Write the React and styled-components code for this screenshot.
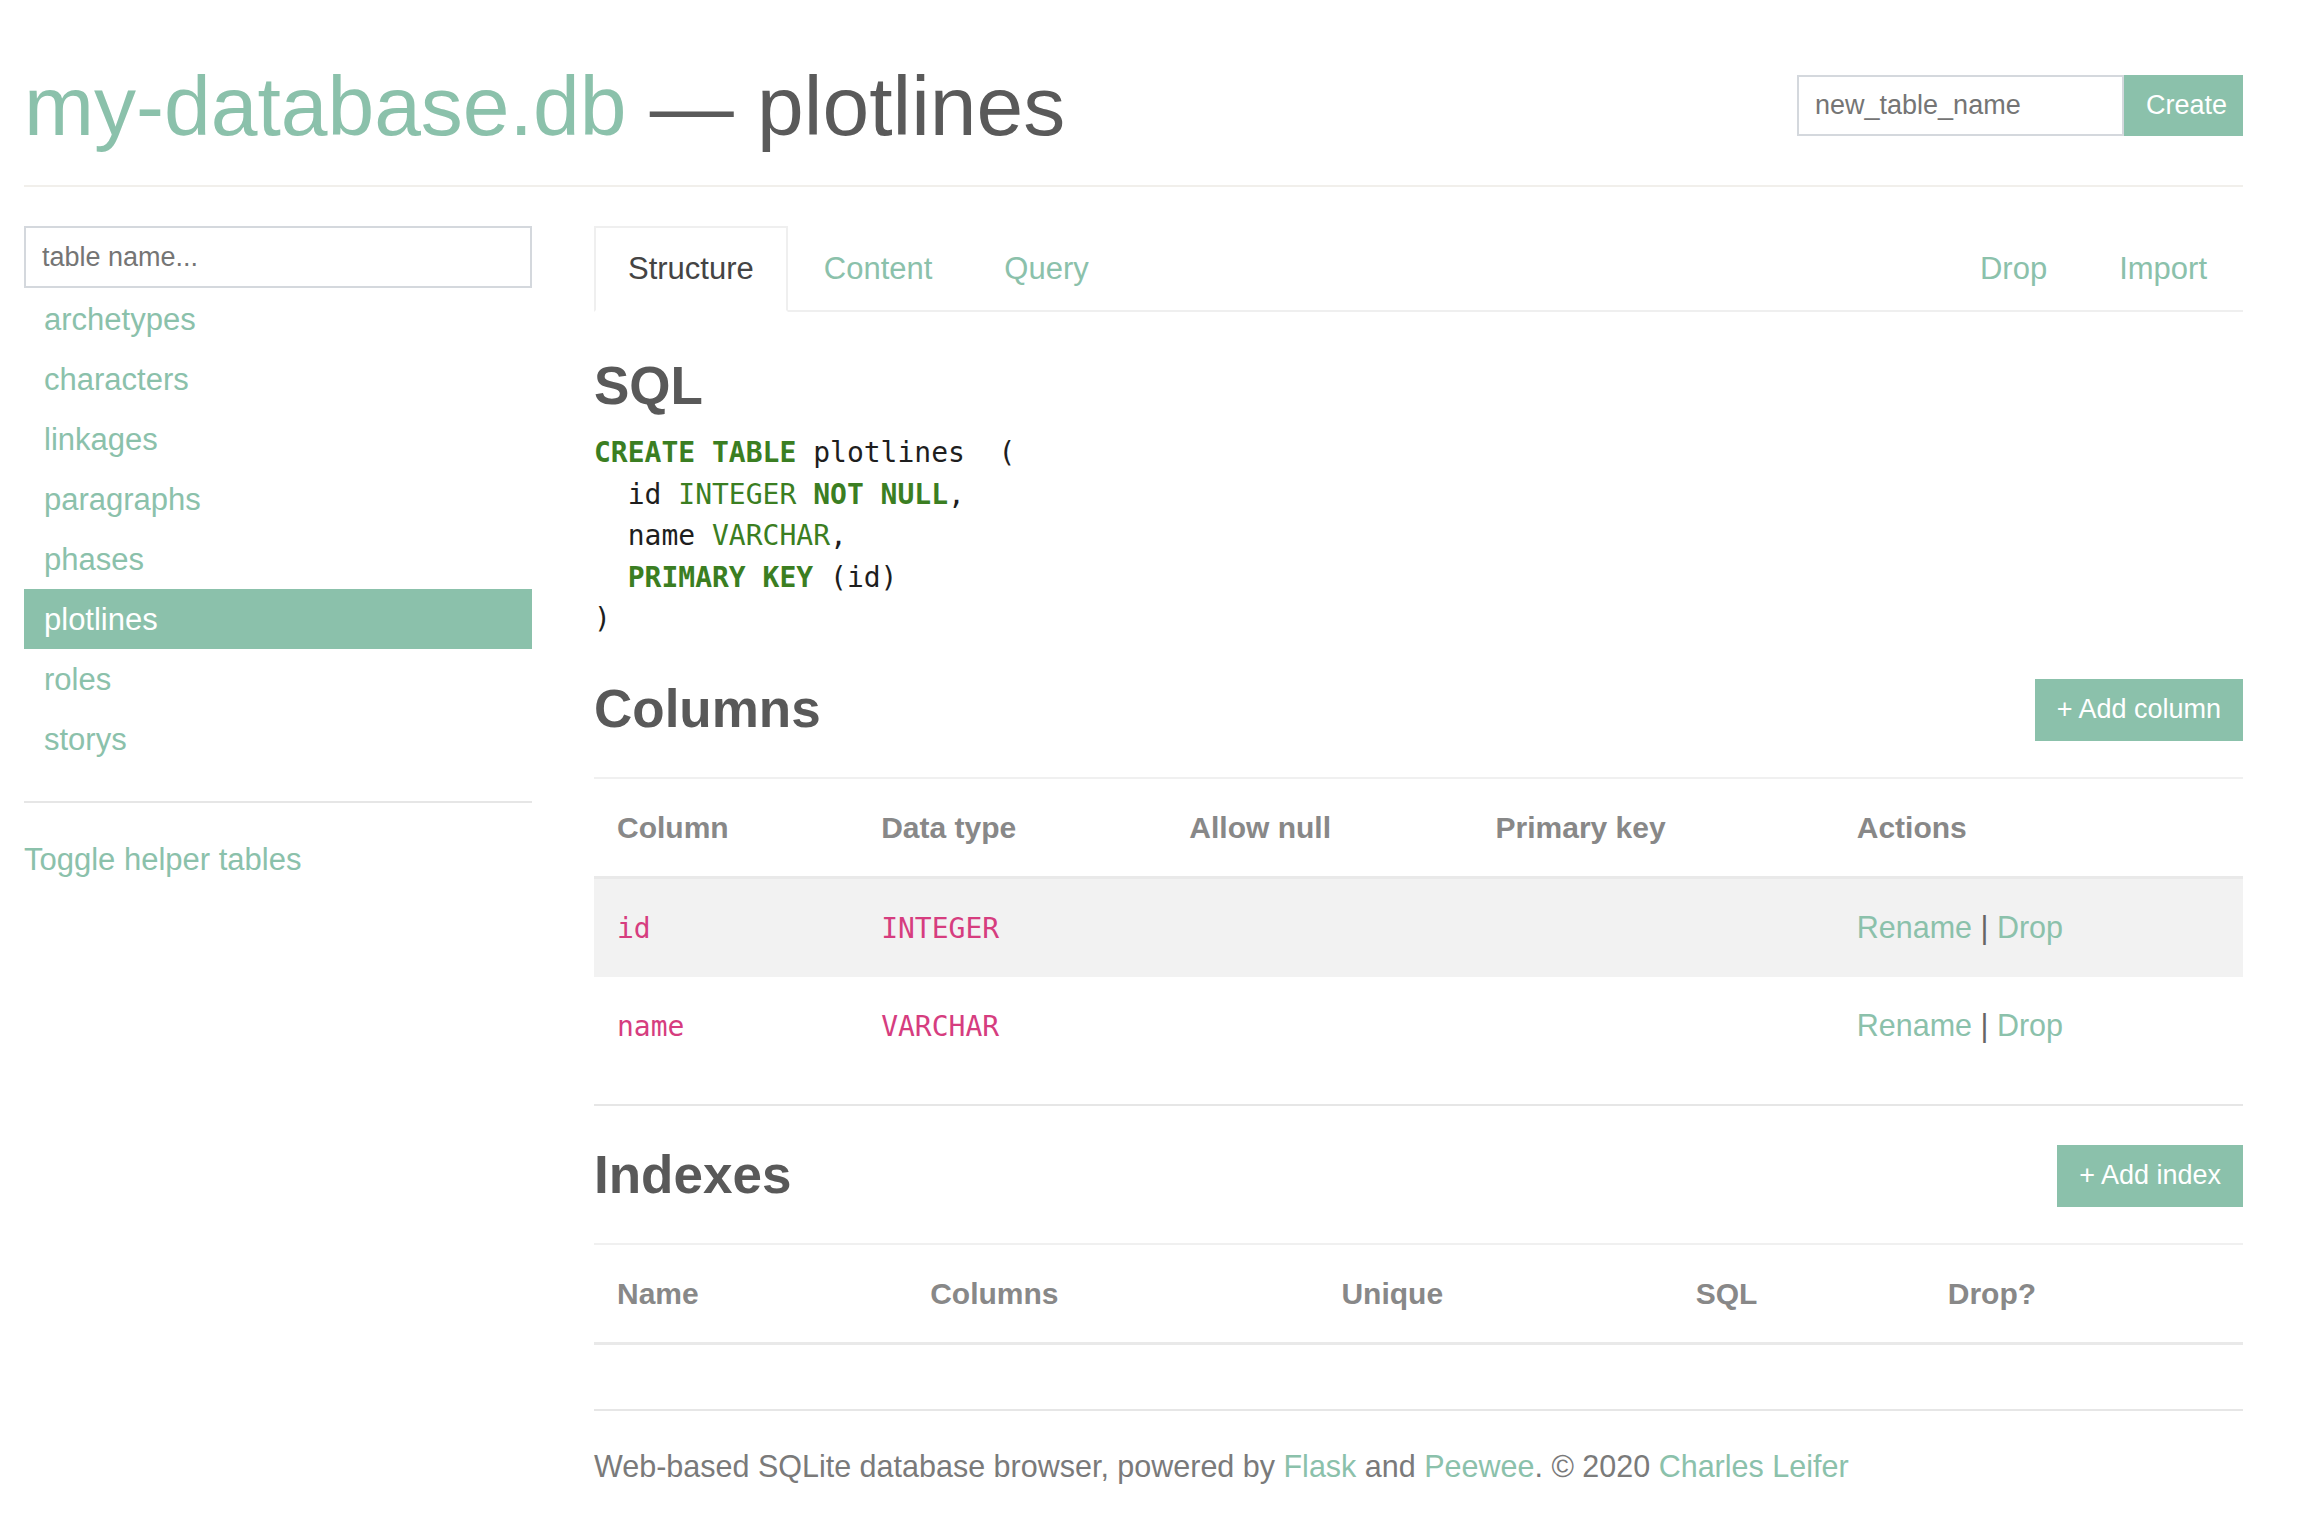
import React from 'react';
import styled, {createGlobalStyle} from 'styled-components';

const green = '#8bc1ab';

const GlobalStyle = createGlobalStyle`
  body {
    margin: 0;
    background: #fff;
    font-family: "Liberation Sans", Arial, sans-serif;
    font-size: 31px;
    color: #555;
  }
`

const Page = styled.div`
  padding: 64px 59px 60px 24px;
`

const Header = styled.header`
  display: flex;
  justify-content: space-between;
  align-items: center;
  padding-bottom: 37px;
  border-bottom: 2px solid #f1efeb;
`

const Title = styled.h1`
  margin: 0;
  font-size: 84px;
  line-height: 84px;
  font-weight: 400;
  color: #5a5a5a;
  white-space: nowrap;
`

const DbName = styled.span`
  color: ${green};
`

const CreateForm = styled.form`
  display: flex;
  margin-top: -2px;
`

const TextInput = styled.input`
  box-sizing: border-box;
  width: ${p => p.$width || '100%'};
  height: ${p => p.$height || '61px'};
  border: 2px solid #d4d8dd;
  padding: 0 16px;
  font-family: "Liberation Sans", Arial, sans-serif;
  font-size: 27px;
  color: #555;
  outline: none;

  ::placeholder {
    color: #858585;
  }
`

const GreenButton = styled.button`
  box-sizing: border-box;
  height: ${p => p.$height || '62px'};
  width: ${p => p.$width || 'auto'};
  padding: 0 22px;
  border: 0;
  background: ${green};
  color: #fff;
  font-family: "Liberation Sans", Arial, sans-serif;
  font-size: 27px;
  cursor: pointer;
`

const Layout = styled.div`
  display: grid;
  grid-template-columns: 508px 1fr;
  column-gap: 62px;
  margin-top: 39px;
`

const Sidebar = styled.aside`
  display: flex;
  flex-direction: column;
`

const TableList = styled.ul`
  list-style: none;
  margin: 1px 0 0;
  padding: 0;
`

const TableItem = styled.li`
  height: 60px;
  line-height: 62px;
  padding-left: 20px;
  color: ${p => p.$active ? '#fff' : green};
  background: ${p => p.$active ? green : 'transparent'};
`

const SideDivider = styled.div`
  margin-top: 32px;
  border-top: 2px solid #e6e6e6;
`

const ToggleLink = styled.a`
  margin-top: 34px;
  line-height: 45px;
  color: ${green};
  text-decoration: none;
`

const Main = styled.main`
  display: flex;
  flex-direction: column;
`

const Tabs = styled.nav`
  display: flex;
  border-bottom: 2px solid #efefef;
`

const Tab = styled.a`
  box-sizing: border-box;
  height: 86px;
  line-height: 82px;
  padding: 0 ${p => p.$active ? '32px' : '34px'};
  margin-bottom: -2px;
  color: ${p => p.$active ? '#444' : green};
  background: ${p => p.$active ? '#fff' : 'transparent'};
  border: 2px solid ${p => p.$active ? '#efefef' : 'transparent'};
  border-bottom-color: ${p => p.$active ? '#fff' : 'transparent'};
  margin-left: ${p => p.$push ? 'auto' : '0'};
  text-decoration: none;
`

const Heading = styled.h2`
  margin: ${p => p.$top || '0'} 0 0;
  font-size: 53px;
  line-height: 65px;
  font-weight: 700;
  color: #595959;
`

const Code = styled.pre`
  margin: 14px 0 0;
  font-family: "DejaVu Sans Mono", "Liberation Mono", monospace;
  font-size: 28px;
  line-height: 41.5px;
  color: #1e1e1e;
`

const Kw = styled.span`
  color: #3b7e22;
  font-weight: ${p => p.$bold ? 700 : 400};
`

const SectionHead = styled.div`
  display: flex;
  justify-content: space-between;
  align-items: flex-end;
  margin-top: ${p => p.$top};
`

const Table = styled.table`
  width: 100%;
  margin-top: 36px;
  border-collapse: collapse;
  table-layout: fixed;
  border-top: 2px solid #f0f0f0;
`

const Th = styled.th`
  box-sizing: border-box;
  width: ${p => p.$width};
  padding: 26px 23px;
  line-height: 45px;
  text-align: left;
  font-size: 30px;
  font-weight: 700;
  color: #888;
  border-bottom: 3px solid #e9e9e9;
  white-space: nowrap;
`

const Row = styled.tr`
  background: ${p => p.$striped ? '#f2f2f2' : 'transparent'};
`

const Td = styled.td`
  padding: 26px 23px;
  line-height: 45px;
  font-size: 30.5px;
  white-space: nowrap;
`

const Mono = styled.span`
  font-family: "DejaVu Sans Mono", "Liberation Mono", monospace;
  font-size: 28px;
  color: #d63d7f;
`

const Link = styled.a`
  color: ${green};
  text-decoration: none;
`

const Sep = styled.span`
  color: #666;
`

const Rule = styled.hr`
  margin: ${p => p.$top} 0 0;
  border: 0;
  border-top: 2px solid #e6e6e6;
`

const Footer = styled.footer`
  margin-top: 33px;
  line-height: 45px;
  font-size: 30.5px;
  color: #7a7a7a;
`

const tables = ['archetypes', 'characters', 'linkages', 'paragraphs', 'phases', 'plotlines', 'roles', 'storys']

const columns = [
    {name: 'id', type: 'INTEGER'},
    {name: 'name', type: 'VARCHAR'},
]

const columnHeads = [
    ['Column', '264px'],
    ['Data type', '308px'],
    ['Allow null', '306px'],
    ['Primary key', '361px'],
    ['Actions', '409px'],
]

const indexHeads = [
    ['Name', '313px'],
    ['Columns', '411px'],
    ['Unique', '354px'],
    ['SQL', '252px'],
    ['Drop?', '318px'],
]

export default function App() {
    return (
        <Page>
            <GlobalStyle/>
            <Header>
                <Title><DbName>my-database.db</DbName> — plotlines</Title>
                <CreateForm onSubmit={e => e.preventDefault()}>
                    <TextInput $width="327px" placeholder="new_table_name"/>
                    <GreenButton $height="61px" $width="119px">Create</GreenButton>
                </CreateForm>
            </Header>

            <Layout>
                <Sidebar>
                    <TextInput $height="62px" placeholder="table name..."/>
                    <TableList>
                        {tables.map(t => (
                            <TableItem key={t} $active={t === 'plotlines'}>{t}</TableItem>
                        ))}
                    </TableList>
                    <SideDivider/>
                    <ToggleLink href="#">Toggle helper tables</ToggleLink>
                </Sidebar>

                <Main>
                    <Tabs>
                        <Tab $active href="#">Structure</Tab>
                        <Tab href="#">Content</Tab>
                        <Tab href="#">Query</Tab>
                        <Tab $push href="#">Drop</Tab>
                        <Tab href="#">Import</Tab>
                    </Tabs>

                    <Heading $top="41px">SQL</Heading>
                    <Code>
                        <Kw $bold>CREATE</Kw> <Kw $bold>TABLE</Kw> plotlines  ({'\n'}
                        {'  '}id <Kw>INTEGER</Kw> <Kw $bold>NOT</Kw> <Kw $bold>NULL</Kw>,{'\n'}
                        {'  '}name <Kw>VARCHAR</Kw>,{'\n'}
                        {'  '}<Kw $bold>PRIMARY</Kw> <Kw $bold>KEY</Kw> (id){'\n'}
                        )
                    </Code>

                    <SectionHead $top="36px">
                        <Heading>Columns</Heading>
                        <GreenButton>+ Add column</GreenButton>
                    </SectionHead>
                    <Table>
                        <thead>
                        <tr>
                            {columnHeads.map(([h, w]) => <Th key={h} $width={w}>{h}</Th>)}
                        </tr>
                        </thead>
                        <tbody>
                        {columns.map((c, i) => (
                            <Row key={c.name} $striped={i % 2 === 0}>
                                <Td><Mono>{c.name}</Mono></Td>
                                <Td><Mono>{c.type}</Mono></Td>
                                <Td/>
                                <Td/>
                                <Td><Link href="#">Rename</Link> <Sep>|</Sep> <Link href="#">Drop</Link></Td>
                            </Row>
                        ))}
                        </tbody>
                    </Table>

                    <Rule $top="29px"/>

                    <SectionHead $top="36px">
                        <Heading>Indexes</Heading>
                        <GreenButton>+ Add index</GreenButton>
                    </SectionHead>
                    <Table>
                        <thead>
                        <tr>
                            {indexHeads.map(([h, w]) => <Th key={h} $width={w}>{h}</Th>)}
                        </tr>
                        </thead>
                        <tbody/>
                    </Table>

                    <Rule $top="64px"/>
                    <Footer>
                        Web-based SQLite database browser, powered by <Link href="#">Flask</Link> and <Link
                        href="#">Peewee</Link>. © 2020 <Link href="#">Charles Leifer</Link>
                    </Footer>
                </Main>
            </Layout>
        </Page>
    );
}
